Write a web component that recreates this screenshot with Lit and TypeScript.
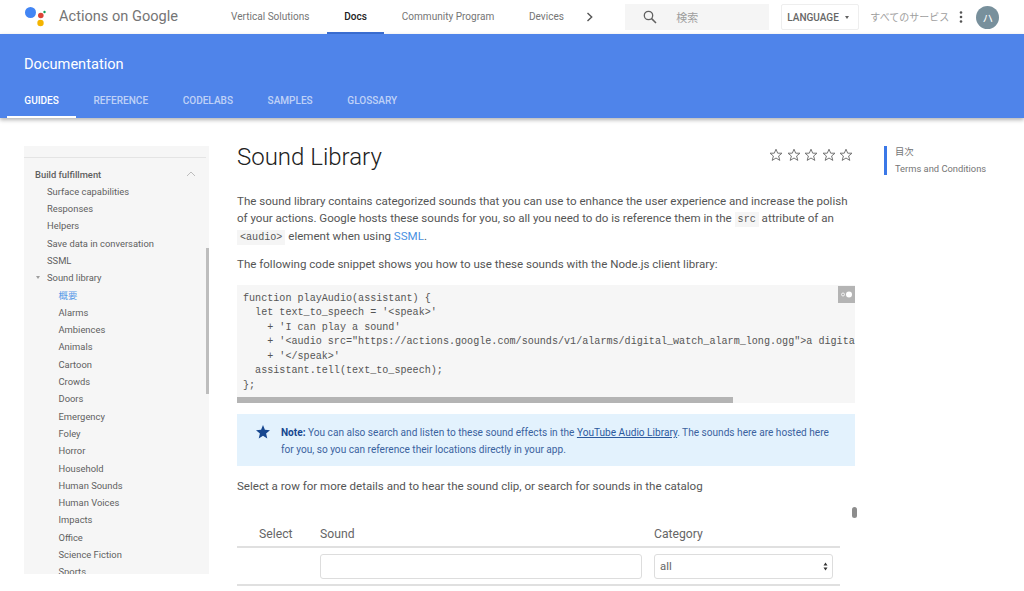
import { LitElement, html, css, svg } from 'lit';
import { customElement } from 'lit/decorators.js';

const NAV = ['Vertical Solutions', 'Docs', 'Community Program', 'Devices'];
const TABS = ['GUIDES', 'REFERENCE', 'CODELABS', 'SAMPLES', 'GLOSSARY'];
const TOP_ITEMS = ['Surface capabilities', 'Responses', 'Helpers', 'Save data in conversation', 'SSML'];
const SOUND_ITEMS = [
  'Alarms', 'Ambiences', 'Animals', 'Cartoon', 'Crowds', 'Doors', 'Emergency', 'Foley', 'Horror',
  'Household', 'Human Sounds', 'Human Voices', 'Impacts', 'Office', 'Science Fiction', 'Sports',
];
const CODE = `function playAudio(assistant) {
  let text_to_speech = '<speak>'
    + 'I can play a sound'
    + '<audio src="https://actions.google.com/sounds/v1/alarms/digital_watch_alarm_long.ogg">a digital watch alarm</audio>'
    + '</speak>'
  assistant.tell(text_to_speech);
};`;

const star = svg`<path d="M7 1.2l1.7 4h4.3l-3.4 2.8 1.2 4.4L7 10l-3.8 2.4 1.2-4.4L1 5.2h4.3z"/>`;

@customElement('app-root')
export class AppRoot extends LitElement {
  static styles = css`
    :host {
      display: block;
      height: 591px;
      overflow: hidden;
      background: #fff;
      font-family: Roboto, "Noto Sans CJK JP", sans-serif;
      color: #444;
    }
    .top {
      display: flex;
      align-items: center;
      height: 34px;
      position: relative;
    }
    .logo { margin-left: 24px; flex: none; }
    .brand {
      margin-left: 12px;
      width: 152px;
      padding-bottom: 2px;
      font-size: 14.6px;
      color: #757575;
      white-space: nowrap;
    }
    .nav { display: flex; height: 34px; margin-left: 2.7px; }
    .nav a {
      display: flex;
      align-items: center;
      padding: 0 17.4px;
      font-size: 10.05px;
      color: #757575;
      white-space: nowrap;
      border-bottom: 2px solid transparent;
      box-sizing: border-box;
    }
    .nav a.on {
      color: #212121;
      font-weight: 500;
      border-bottom-color: #3b6fd4;
    }
    .chev { margin-left: 5px; flex: none; }
    .search {
      display: flex;
      align-items: center;
      margin-left: 31px;
      width: 144px;
      height: 26px;
      background: #f5f5f5;
      font-size: 11px;
      color: #9e9e9e;
      flex: none;
    }
    .search svg { margin-left: 18px; margin-right: 19px; }
    .lang {
      display: flex;
      align-items: center;
      margin-left: 12px;
      width: 78px;
      height: 26px;
      box-sizing: border-box;
      border: 1px solid #eee;
      border-radius: 2px;
      padding-left: 5px;
      font-size: 10px;
      font-weight: 500;
      color: #666;
      flex: none;
    }
    .lang i {
      margin-left: 6px;
      border: 2.5px solid transparent;
      border-top: 3px solid #616161;
      border-bottom: 0;
    }
    .all {
      margin-left: 11px;
      padding-bottom: 1px;
      font-size: 10px;
      color: #9e9e9e;
      white-space: nowrap;
      width: 89px;
      flex: none;
    }
    .dots { flex: none; }
    .avatar {
      margin-left: 13px;
      width: 23px;
      height: 23px;
      border-radius: 50%;
      background: #78909c;
      color: #fff;
      font-size: 10.5px;
      display: flex;
      align-items: center;
      justify-content: center;
      flex: none;
    }
    .band {
      height: 84px;
      background: #4f84ea;
      box-shadow: 0 2px 4px rgba(0, 0, 0, 0.3);
      position: relative;
      display: flex;
      flex-direction: column;
    }
    .band h2 {
      margin: 0;
      padding: 20.5px 0 0 24px;
      height: 19px;
      font-size: 14.6px;
      line-height: 19px;
      font-weight: 400;
      color: #fff;
      box-sizing: content-box;
    }
    .tabs { display: flex; margin: 16.5px 0 0 7px; }
    .tabs a {
      height: 28px;
      box-sizing: border-box;
      padding: 3px 17.3px 0;
      font-size: 10.05px;
      line-height: 16px;
      font-weight: 500;
      color: rgba(255, 255, 255, 0.65);
      white-space: nowrap;
    }
    .tabs a.on {
      color: #fff;
      border-bottom: 2px solid #fff;
    }
    .body {
      display: flex;
      align-items: flex-start;
      padding: 28px 0 0 24px;
    }
    .side {
      width: 185px;
      height: 428px;
      flex: none;
      background: #f6f6f6;
      overflow: hidden;
      position: relative;
      box-sizing: border-box;
      padding-top: 11px;
      font-size: 9.4px;
      line-height: 17.3px;
      color: #5f5f5f;
    }
    .side hr {
      border: 0;
      border-top: 1px solid #e4e4e4;
      margin: 0 3px 7.5px 0;
    }
    .side .head {
      display: flex;
      justify-content: space-between;
      align-items: center;
      padding: 0 13px 0 11px;
      font-weight: 500;
    }
    .side .l1 { padding-left: 23px; white-space: nowrap; position: relative; }
    .side .l2 { padding-left: 34.5px; white-space: nowrap; }
    .side .cur { color: #5a9be8; }
    .side .tri {
      position: absolute;
      left: 12px;
      top: 7px;
      border: 2.5px solid transparent;
      border-top: 3px solid #9e9e9e;
      border-bottom: 0;
    }
    .side .thumb {
      position: absolute;
      right: 0;
      top: 102px;
      width: 3px;
      height: 146px;
      background: #bdbdbd;
    }
    .main {
      width: 618px;
      margin-left: 28px;
      flex: none;
      font-size: 11.55px;
      line-height: 17.3px;
      color: #555;
      position: relative;
    }
    .title { display: flex; justify-content: space-between; align-items: flex-start; }
    h1 {
      margin: 0;
      font-size: 24px;
      line-height: 22px;
      font-weight: 300;
      color: #212121;
    }
    .stars { display: flex; gap: 3.4px; margin: 2px 2px 0 0; }
    .stars svg { fill: none; stroke: #757575; stroke-width: 1; }
    p { margin: 0; }
    .intro { margin-top: 25px; }
    .second { margin-top: 11px; }
    code {
      font-family: "Liberation Mono", "DejaVu Sans Mono", monospace;
      font-size: 10.1px;
      line-height: 1;
      background: #f5f5f5;
      padding: 2px 3px;
    }
    .main a.link { color: #4a90e2; text-decoration: none; }
    .codebox {
      margin-top: 11.6px;
      height: 118px;
      background: #f6f6f6;
      position: relative;
      overflow: hidden;
    }
    pre {
      margin: 0;
      padding: 7px 0 0 6px;
      font-family: "Liberation Mono", "DejaVu Sans Mono", monospace;
      font-size: 10.1px;
      line-height: 14.5px;
      color: #555;
    }
    .codebar {
      position: absolute;
      left: 0;
      bottom: 0;
      width: 496px;
      height: 6px;
      background: #b4b4b4;
    }
    .toggle {
      position: absolute;
      right: 0;
      top: 1px;
      width: 17px;
      height: 17px;
      background: #b4b4b4;
      display: flex;
      align-items: center;
      justify-content: center;
    }
    .note {
      margin-top: 11.6px;
      height: 52px;
      box-sizing: border-box;
      background: #e3f2fd;
      display: flex;
      padding: 9.5px 20px 0 0;
      color: #3b639f;
      font-size: 10.1px;
    }
    .note svg { flex: none; margin: 1.5px 11px 0 19px; }
    .note b { font-weight: 700; color: #17478f; }
    .note a { color: #2c5a9e; text-decoration: underline; }
    .select-note { margin-top: 11.8px; }
    .grab {
      position: absolute;
      left: 615px;
      top: 361px;
      width: 5px;
      height: 11px;
      border-radius: 3px;
      background: #8d8d8d;
    }
    .tbl {
      margin-top: 27px;
      width: 603px;
      font-size: 12.2px;
      color: #666;
    }
    .tbl .hd, .tbl .rw {
      display: grid;
      grid-template-columns: 83px 322px 12px 179px;
    }
    .tbl .hd {
      height: 24px;
      align-items: center;
      border-bottom: 2px solid #e0e0e0;
    }
    .tbl .hd span:first-child { padding-left: 22px; }
    .tbl .rw {
      padding-top: 6px;
      height: 38px;
      box-sizing: border-box;
      border-bottom: 2px solid #e0e0e0;
    }
    .box {
      height: 25px;
      box-sizing: border-box;
      border: 1px solid #ddd;
      border-radius: 3px;
      background: #fff;
      display: flex;
      align-items: center;
      justify-content: space-between;
      padding: 0 4px 0 5px;
      font-size: 11.3px;
    }
    .toc {
      margin-left: 29px;
      border-left: 3px solid #3b78e7;
      height: 29px;
      padding-left: 8px;
      font-size: 9.35px;
      color: #757575;
      white-space: nowrap;
    }
    .toc .label { line-height: 11px; height: 11px; }
    .toc .entry { margin-top: 5px; line-height: 14px; }
  `;

  render() {
    return html`
      <div class="top">
        <svg class="logo" width="23" height="27" viewBox="24 4 23 27">
          <circle cx="30.5" cy="12.5" r="5.5" fill="#4285f4"/>
          <circle cx="40.8" cy="15.5" r="2.8" fill="#db4437"/>
          <circle cx="44.5" cy="12" r="1.2" fill="#0f9d58"/>
          <circle cx="40.5" cy="23" r="3.2" fill="#f4b400"/>
        </svg>
        <span class="brand">Actions on Google</span>
        <div class="nav">
          ${NAV.map((n) => html`<a class=${n === 'Docs' ? 'on' : ''}>${n}</a>`)}
        </div>
        <svg class="chev" width="8" height="10" viewBox="0 0 8 10">
          <path d="M1.5 1l4.2 4-4.2 4" fill="none" stroke="#555" stroke-width="1.4"/>
        </svg>
        <div class="search">
          <svg width="14" height="14" viewBox="0 0 14 14">
            <circle cx="5.5" cy="5.5" r="4.2" fill="none" stroke="#616161" stroke-width="1.3"/>
            <path d="M8.6 8.6l4.4 4.4" stroke="#616161" stroke-width="1.5"/>
          </svg>
          検索
        </div>
        <div class="lang">LANGUAGE<i></i></div>
        <span class="all">すべてのサービス</span>
        <svg class="dots" width="4" height="12" viewBox="0 0 4 12">
          <circle cx="2" cy="1.5" r="1.3" fill="#555"/>
          <circle cx="2" cy="6" r="1.3" fill="#555"/>
          <circle cx="2" cy="10.5" r="1.3" fill="#555"/>
        </svg>
        <div class="avatar">ハ</div>
      </div>
      <div class="band">
        <h2>Documentation</h2>
        <div class="tabs">
          ${TABS.map((t) => html`<a class=${t === 'GUIDES' ? 'on' : ''}>${t}</a>`)}
        </div>
      </div>
      <div class="body">
        <nav class="side">
          <hr />
          <div class="head">
            Build fulfillment
            <svg width="10" height="6" viewBox="0 0 10 6">
              <path d="M1 5l4-4 4 4" fill="none" stroke="#bdbdbd" stroke-width="1"/>
            </svg>
          </div>
          ${TOP_ITEMS.map((i) => html`<div class="l1">${i}</div>`)}
          <div class="l1"><span class="tri"></span>Sound library</div>
          <div class="l2 cur">概要</div>
          ${SOUND_ITEMS.map((i) => html`<div class="l2">${i}</div>`)}
          <div class="thumb"></div>
        </nav>
        <main class="main">
          <div class="title">
            <h1>Sound Library</h1>
            <div class="stars">
              ${[0, 1, 2, 3, 4].map(() => html`<svg width="14" height="14" viewBox="0 0 14 14">${star}</svg>`)}
            </div>
          </div>
          <p class="intro">
            The sound library contains categorized sounds that you can use to enhance the user experience and increase the polish
            of your actions. Google hosts these sounds for you, so all you need to do is reference them in the <code>src</code> attribute of an
            <code>&lt;audio&gt;</code> element when using <a class="link">SSML</a>.
          </p>
          <p class="second">The following code snippet shows you how to use these sounds with the Node.js client library:</p>
          <div class="codebox">
            <pre>${CODE}</pre>
            <div class="codebar"></div>
            <div class="toggle">
              <svg width="13" height="7" viewBox="0 0 13 7">
                <circle cx="3" cy="3.5" r="1.5" fill="none" stroke="#fff" stroke-width="0.8"/>
                <circle cx="9" cy="3.5" r="3" fill="#fff"/>
              </svg>
            </div>
          </div>
          <div class="note">
            <svg width="14" height="14" viewBox="0 0 14 14">
              <path d="M7 0l1.9 4.8 5.1.4-3.9 3.2 1.2 5L7 10.7l-4.3 2.7 1.2-5L0 5.2l5.1-.4z" fill="#17478f"/>
            </svg>
            <div>
              <b>Note:</b> You can also search and listen to these sound effects in the <a>YouTube Audio Library</a>. The sounds here are hosted here
              for you, so you can reference their locations directly in your app.
            </div>
          </div>
          <p class="select-note">Select a row for more details and to hear the sound clip, or search for sounds in the catalog</p>
          <div class="grab"></div>
          <div class="tbl">
            <div class="hd">
              <span>Select</span><span>Sound</span><span></span><span>Category</span>
            </div>
            <div class="rw">
              <span></span>
              <div class="box"></div>
              <span></span>
              <div class="box">
                all
                <svg width="5" height="9" viewBox="0 0 5 9">
                  <path d="M2.5 0.5L4.5 3.5H0.5zM2.5 8.5L0.5 5.5H4.5z" fill="#333"/>
                </svg>
              </div>
            </div>
          </div>
        </main>
        <aside class="toc">
          <div class="label">目次</div>
          <div class="entry">Terms and Conditions</div>
        </aside>
      </div>
    `;
  }
}
